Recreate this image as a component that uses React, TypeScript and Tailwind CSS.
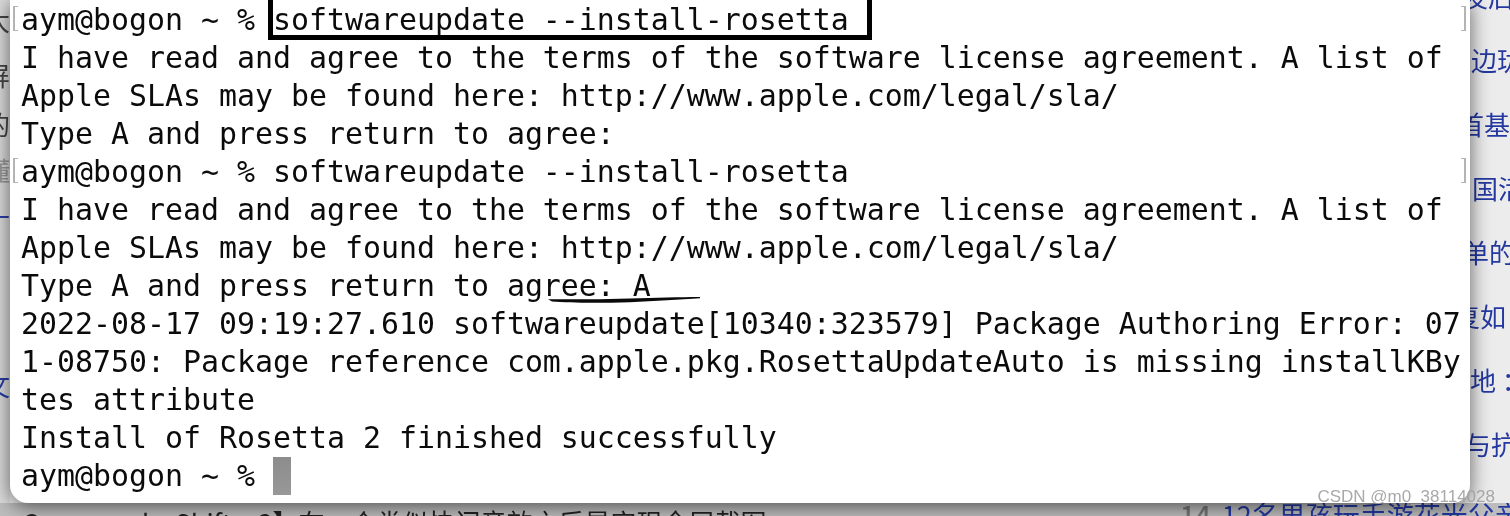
const lines: string[] = [
  "aym@bogon ~ % softwareupdate --install-rosetta",
  "I have read and agree to the terms of the software license agreement. A list of",
  "Apple SLAs may be found here: http://www.apple.com/legal/sla/",
  "Type A and press return to agree:",
  "aym@bogon ~ % softwareupdate --install-rosetta",
  "I have read and agree to the terms of the software license agreement. A list of",
  "Apple SLAs may be found here: http://www.apple.com/legal/sla/",
  "Type A and press return to agree: A",
  "2022-08-17 09:19:27.610 softwareupdate[10340:323579] Package Authoring Error: 07",
  "1-08750: Package reference com.apple.pkg.RosettaUpdateAuto is missing installKBy",
  "tes attribute",
  "Install of Rosetta 2 finished successfully",
];

function Bracket({ side, top }: { side: "l" | "r"; top: string }) {
  return (
    <div
      className={
        side === "l"
          ? `absolute left-[3px] w-[5px] h-[25px] border-l-2 border-t border-b border-[#b4b4b4] ${top}`
          : `absolute right-[4px] w-[5px] h-[25px] border-r-2 border-t border-b border-[#b4b4b4] ${top}`
      }
    />
  );
}

export default function App() {
  return (
    <div className="relative w-[1510px] h-[516px] overflow-hidden flex flex-col bg-[#ececec] blur-[0.35px] font-['Noto_Sans_CJK_SC',sans-serif]">
      <div className="flex h-[503px] shrink-0">
        {/* left page fragment */}
        <div className="w-[10px] shrink-0 overflow-hidden flex flex-col text-[26px] leading-none bg-[#dcdcdc]">
          <div className="h-[40px] shrink-0 flex items-center justify-end text-[#444]"><span className="shrink-0">大</span></div>
          <div className="h-[70px] shrink-0 flex items-center justify-end text-[#444]"><span className="shrink-0">屏</span></div>
          <div className="h-[28px] shrink-0 flex items-center justify-end text-[#444]"><span className="shrink-0">的</span></div>
          <div className="h-[64px] shrink-0 flex items-center justify-end text-[#999]"><span className="shrink-0">懂</span></div>
          <div className="h-[30px] shrink-0 flex items-center justify-end text-[#2a3fa5]"><span className="shrink-0">十</span></div>
          <div className="h-[128px] shrink-0" />
          <div className="h-[50px] shrink-0 flex items-center justify-end text-[#2a3fa5]"><span className="shrink-0">文</span></div>
        </div>

        {/* terminal window */}
        <div className="relative z-10 w-[1460px] shrink-0 h-full bg-white rounded-b-[18px] shadow-[0_3px_20px_rgba(0,0,0,0.6)] pl-[11px] pt-px font-['DejaVu_Sans_Mono',monospace] text-[29.9px] leading-[38px] text-[#0b0b0b] whitespace-pre">
          {lines.map((l, i) => (
            <div key={i} className="h-[38px]">{l}</div>
          ))}
          <div className="h-[38px] flex">
            <span>aym@bogon ~ % </span>
            <span className="w-[18px] h-[38px] bg-gradient-to-b from-[#8c8c8c] to-[#989898]" />
          </div>

          <Bracket side="l" top="top-[6px]" />
          <Bracket side="l" top="top-[158px]" />
          <Bracket side="r" top="top-[6px]" />
          <Bracket side="r" top="top-[158px]" />

          {/* hand-drawn box round the first command */}
          <div className="absolute left-[258px] top-0 w-[604px] h-[40px] border-l-[5px] border-r-[5px] border-b-[5px] border-black" />

          {/* hand-drawn underline */}
          <svg className="absolute left-[530px] top-[292px]" width="170" height="14" viewBox="0 0 170 14">
            <path d="M8 7.2 C 40 7, 60 7.4, 90 6.4 C 115 5.8, 140 5, 160 5 L160 6.2 C 140 7.2, 115 9, 90 10.2 C 60 11.2, 30 11, 12 9.6 Z" fill="#0a0a0a" />
          </svg>
        </div>

        {/* right page fragment */}
        <div className="flex-1 min-w-0 overflow-hidden flex flex-col text-[26px] leading-none text-[#2438a0] whitespace-nowrap -mt-[36px]">
          <div className="h-[64px] shrink-0 flex items-center -ml-[8px]">发后</div>
          <div className="h-[64px] shrink-0 flex items-center ml-px">边珑</div>
          <div className="h-[64px] shrink-0 flex items-center -ml-[12px]">首基</div>
          <div className="h-[64px] shrink-0 flex items-center ml-[2px]">国活</div>
          <div className="h-[64px] shrink-0 flex items-center -ml-[7px]">单的</div>
          <div className="h-[64px] shrink-0 flex items-center -ml-[16px]">复如</div>
          <div className="h-[64px] shrink-0 flex items-center">地 ：</div>
          <div className="h-[64px] shrink-0 flex items-center -ml-[5px]">与抗</div>
        </div>
      </div>

      {/* bottom page fragment */}
      <div className="relative h-[13px] shrink-0 overflow-hidden bg-[#bdbdbd] text-[26px] leading-[26px] whitespace-nowrap flex pt-[6px] pl-[22px]">
        <span className="text-[#222] shrink-0 w-[1158px]">Command + Shift + 3】在一个类似快门音效之后是实现全屏截图</span>
        <span className="shrink-0 flex gap-[11px] -mt-[7px] text-[27px]">
          <span className="text-[#777] font-medium">14</span>
          <span className="text-[#2438a0]">12名男孩玩手游花光父亲</span>
        </span>
      </div>

      {/* watermark */}
      <div className="absolute z-20 right-[15px] top-[487px] text-[17px] leading-[20px] font-['Liberation_Sans',sans-serif] text-[#a0a0a0]/90">
        CSDN @m0_38114028
      </div>
    </div>
  );
}
